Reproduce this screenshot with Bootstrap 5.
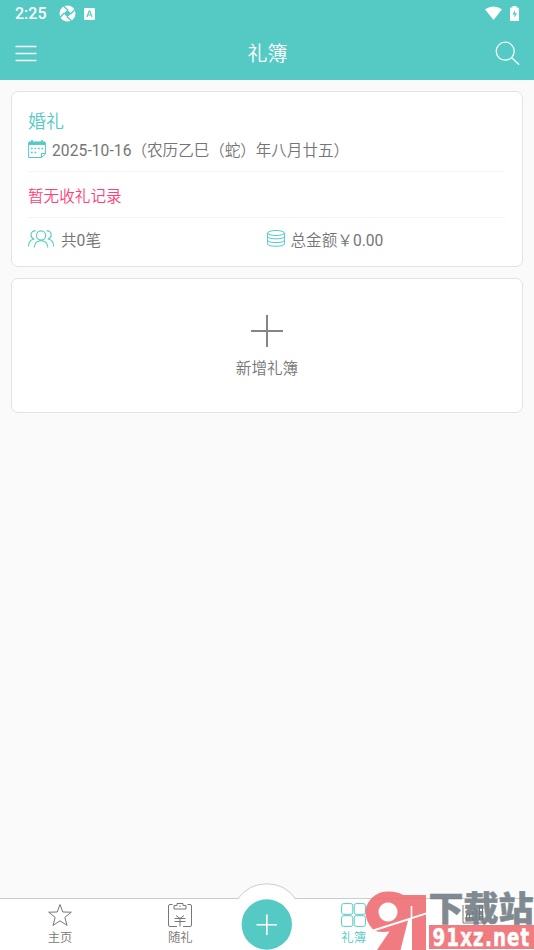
<!DOCTYPE html>
<html lang="zh-CN">
<head>
<meta charset="utf-8">
<meta name="viewport" content="width=device-width, initial-scale=1">
<title>礼簿</title>
<link href="https://cdn.jsdelivr.net/npm/bootstrap@5.3.0/dist/css/bootstrap.min.css" rel="stylesheet">
<style>
:root{--teal:#55cac4;--ink:#757575}
body{font-family:Roboto,"Noto Sans CJK SC",sans-serif;background:#fafafa;color:var(--ink);height:950px;overflow:hidden;font-size:15.6px;line-height:24px;font-weight:350}
svg{display:block;flex:none;fill:none}
.app-head{background:var(--teal);height:80px;color:#fff}
.status{height:27px;padding:0 15px;font-size:16px;font-weight:500}
.status .app-mark{margin:0 8px 0 12px}
.title-row{height:53px;padding:0 14px 0 15px}
.title-row h1{font-size:20px;line-height:26px;font-weight:350}
.content{padding:11px 11px 0;gap:11px}
.panel{border:1px solid #e3e3e3;border-radius:7px;background:#fff}
.book{height:176px;padding:17px 17px 0 16px}
.book h2{font-size:18px;line-height:26px;color:var(--teal);font-weight:350}
.rule{border-bottom:1px solid #f4f4f4}
.date-row{height:37px;padding-top:4px}
.date-row .fw-normal{letter-spacing:.08px}
.date-row .lunar{letter-spacing:-.06px}
.none-row{height:46px;padding-top:13px;color:#ff3f7c}
.totals{padding-top:11px}
.label{margin-left:6px}
.add{height:135px;padding-top:35px}
.add span{margin-top:9px}
.tabs{height:52px;background:#fff;border-top:1px solid #ccc;font-size:12.3px;line-height:16px}
.tabs .tab{width:120px;padding-top:4px}
.tab span{margin-top:3px}
.tab.on{color:var(--teal);margin-left:53px}
.hump{left:232px;top:-17px}
.stamp{right:0;bottom:0;width:170px;height:62px;opacity:.88}
.stamp text{font-family:"Noto Sans CJK SC",sans-serif;font-weight:900}
.stamp .site{font-family:"DejaVu Sans","Noto Sans",sans-serif;font-weight:700}
</style>
</head>
<body class="d-flex flex-column">
<header class="app-head">
  <div class="status d-flex align-items-center">
    <span>2:25</span>
    <svg class="app-mark" width="17" height="17" viewBox="0 0 17 17"><circle cx="8.500" cy="8.500" r="8" fill="#fff"/><path d="M8.500 4.700 12.300 8.500 8.500 12.300 4.700 8.500Z" fill="#55cac4"/><path d="M4.500 1 9 5.300M16 4.500 11.700 9M12.500 16 8 11.700M1 12.500 5.300 8" stroke="#55cac4" stroke-width="1.300"/></svg>
    <svg width="11" height="12" viewBox="0 0 11 12"><rect width="11" height="12" rx="1" fill="#fff"/><path d="M3 9 5.100 3h.8L8 9M3.700 7h3.600" stroke="#55cac4" stroke-width="1.200"/></svg>
    <svg class="ms-auto" width="17" height="15" viewBox="0 0 17 15"><path d="M0 3.300Q8.500-2.300 17 3.300L8.500 14Z" fill="#fff"/></svg>
    <svg class="ms-2" width="9" height="16" viewBox="0 0 9 16"><path d="M2.500 0h4v1.500H8q1 0 1 1V15H0V2.500q0-1 1-1h1.500Z" fill="#fff"/><path d="M5 4 2.500 8.500h2V12L7 7.300H5Z" fill="#55cac4"/></svg>
  </div>
  <div class="title-row d-flex align-items-center justify-content-between">
    <svg width="25" height="18" viewBox="0 0 25 18"><path d="M1 1.500h20M1 8.500h20M1 15.500h20" stroke="#fff" stroke-width="1.300" stroke-linecap="round"/></svg>
    <h1 class="m-0">礼簿</h1>
    <svg width="25" height="25" viewBox="0 0 25 25"><circle cx="10.200" cy="10.200" r="9" stroke="#fff" stroke-width="1.200"/><path d="m16.800 16.800 7.300 7" stroke="#fff" stroke-width="1.300"/></svg>
  </div>
</header>

<main class="content flex-grow-1 d-flex flex-column">
  <section class="panel book">
    <h2 class="m-0">婚礼</h2>
    <div class="date-row rule d-flex">
      <svg width="18" height="20" viewBox="0 -1 18 20" stroke="#55cac4"><path d="M.6 2.500h16.800V14L13.500 17.500H.6ZM17.400 13.500h-3.900V17.500"/><path d="M1 3.200h16" stroke-width="3.500"/><path d="M4 0v3M14 0v3" stroke-width="1.600"/><path d="M3 8.500h12M3 12.500h5.500" stroke-width="1.700" stroke-dasharray="1.700 1.800"/></svg>
      <span class="label"><span class="fw-normal">2025-10-16</span><span class="lunar">（农历乙巳（蛇）年八月廿五）</span></span>
    </div>
    <div class="none-row rule">暂无收礼记录</div>
    <div class="totals row g-0">
      <div class="col-6 d-flex">
        <svg width="27" height="20" viewBox="0 -1 27 20" stroke="#55cac4" stroke-width="1.100"><circle cx="13.100" cy="5.500" r="4.600"/><path d="M6.300 17.500c.3-4 2.800-6.700 6.800-6.700s6.500 2.700 6.800 6.700M7.800 1.100C5.300.3 3 2.100 3 4.700c0 2 1.200 3.600 3 4.200M.5 16.500c.2-4 2.500-7.200 6-7.500M18.400 1.100c2.500-.8 4.800 1 4.800 3.600 0 2-1.200 3.600-3 4.200M25.700 16.500c-.2-4-2.500-7.200-6-7.500"/></svg>
        <span class="label">共<span class="fw-normal">0</span>笔</span>
      </div>
      <div class="col-6 d-flex">
        <svg width="18" height="20" viewBox="0 -1 18 20" stroke="#55cac4"><ellipse cx="9" cy="3" rx="8.300" ry="2.500"/><path d="M.6 3v11c0 3 16.800 3 16.800 0V3M.6 6.600c0 3 16.800 3 16.800 0M.6 10.300c0 3 16.800 3 16.800 0"/></svg>
        <span class="label">总金额￥<span class="fw-normal">0.00</span></span>
      </div>
    </div>
  </section>
  <section class="panel add d-flex flex-column align-items-center">
    <svg width="34" height="34" viewBox="0 0 34 34"><path d="M17 1v32M1 17h32" stroke="#858585" stroke-width="2"/></svg>
    <span>新增礼簿</span>
  </section>
</main>

<nav class="tabs position-relative d-flex justify-content-between">
  <div class="tab d-flex flex-column align-items-center">
    <svg width="24" height="24" viewBox="0 0 24 24"><path d="m12 1.500 2.800 7.500 8.500.2-6.500 5.200 2.300 8-7.100-4.600-7 4.600 2.200-8L.7 9.200 9.200 9Z" stroke="#777"/></svg>
    <span>主页</span>
  </div>
  <div class="tab d-flex flex-column align-items-center">
    <svg width="24" height="24" viewBox="0 0 24 24" stroke="#777"><path d="M4.500 1.500H2q-1.500 0-1.500 1.500v19q0 1.500 1.500 1.500h7M19.500 1.500H22q1.500 0 1.500 1.500v19q0 1.500-1.500 1.500h-7M6 2.500h3V.5h6v2h3v3.500H6ZM12 2.500v1.500M8 12.500l4 3 4-3M6.500 15.500h11M6.500 18.500h11M12 15.500v8"/></svg>
    <span>随礼</span>
  </div>
  <div class="tab on d-flex flex-column align-items-center">
    <svg width="25" height="24" viewBox="0 0 25 24" stroke="#55cac4"><rect x=".6" y=".6" width="11.200" height="10.700" rx="2"/><rect x="13.200" y=".6" width="11.200" height="10.700" rx="2"/><rect x=".6" y="12.700" width="11.200" height="10.700" rx="2"/><rect x="13.200" y="12.700" width="11.200" height="10.700" rx="2"/></svg>
    <span>礼簿</span>
  </div>
  <div class="tab d-flex flex-column align-items-center">
    <svg width="24" height="24" viewBox="0 0 24 24" stroke="#777"><path d="M1 2v18h22M4.500 11h3v6h-3ZM11 6h3v11h-3ZM17.500 3h3v14h-3Z"/></svg>
    <span>统计</span>
  </div>
  <svg class="hump position-absolute" width="70" height="69" viewBox="0 0 70 69">
    <path d="M4 18 6.500 17Q17 1.800 34.800 1.800T63 17l3 1v51H4Z" fill="#fff"/><path d="M6 16.500Q17 1.800 34.800 1.800T63.500 16.500" stroke="#ccc"/>
    <circle cx="34.800" cy="42.500" r="25.200" fill="#55cac4"/><path d="M34.800 32.500v20.500M24.500 42.700H45" stroke="#fff" stroke-width="1.600"/>
  </svg>
  <svg class="stamp position-absolute" viewBox="364 888 170 62">
    <path d="M373 929.500C366 922 364 913 366.500 906 371 896 379 891.500 388 891.500c7 0 12 1.500 15 3.500h23v17.500L412.300 917v-11h-1.600v11.500ZM388 902.500a9.500 9.500 0 1 0 .01 0Z" fill="#ef6b70" fill-rule="evenodd"/>
    <path d="M375 931 408 920.500 400.500 950H377l12.500-18.500Q382 932.500 375 931ZM412 919l14-4.500V950H412Z" fill="#ef6b70"/>
    <text x="428.500" y="920.500" font-size="34" textLength="105" lengthAdjust="spacingAndGlyphs" fill="#707b82" stroke="#707b82" stroke-width=".5">下载站</text>
    <path d="M429 925h105v24H429Z" fill="#ef6b70"/>
    <text class="site" x="432.500" y="946" font-size="24" textLength="98" lengthAdjust="spacingAndGlyphs" letter-spacing="1.500" fill="#fff" stroke="#fff" stroke-width=".5">91xz.net</text>
  </svg>
</nav>
<script src="https://cdn.jsdelivr.net/npm/bootstrap@5.3.0/dist/js/bootstrap.bundle.min.js"></script>
</body>
</html>
